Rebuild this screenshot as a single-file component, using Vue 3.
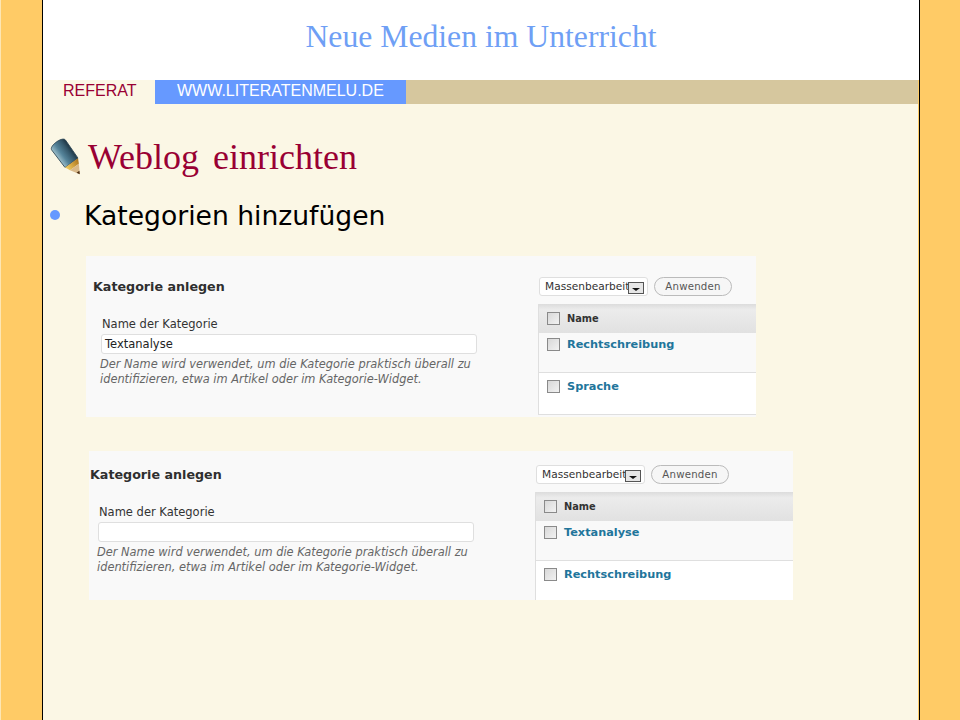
<script setup>
const panels = [
  { id: 1, value: 'Textanalyse', rows: ['Rechtschreibung', 'Sprache'] },
  { id: 2, value: '', rows: ['Textanalyse', 'Rechtschreibung'] }
]
</script>

<template>
  <div class="page">
    <div class="side side-left"></div>
    <main class="slide">
      <header class="title">Neue Medien im Unterricht</header>
      <nav class="nav">
        <span class="nav-first">REFERAT</span>
        <span class="nav-link">WWW.LITERATENMELU.DE</span>
      </nav>
      <div class="content">
        <h1 class="heading">
          <svg class="pencil" width="36" height="40" viewBox="0 0 36 40">
            <defs>
              <linearGradient id="body" x1="0" y1="0" x2="1" y2="0">
                <stop offset="0" stop-color="#9fc0cb" />
                <stop offset="0.35" stop-color="#55849a" />
                <stop offset="0.75" stop-color="#35586b" />
                <stop offset="1" stop-color="#1d3442" />
              </linearGradient>
              <linearGradient id="tip" x1="0" y1="0" x2="1" y2="0">
                <stop offset="0" stop-color="#f6d164" />
                <stop offset="1" stop-color="#a9701a" />
              </linearGradient>
            </defs>
            <g transform="translate(20 21) rotate(-36)">
              <path d="M-8.5 -16C-8.5 -21 8.5 -21 8.5 -16L8 6H-8Z" fill="url(#body)" stroke="#2b4654" stroke-width="0.8" />
              <path d="M-8 6H8L5.5 11H-5.5Z" fill="url(#tip)" />
              <path d="M-5.5 11H5.5L0 20Z" fill="#d9b98a" />
              <path d="M-1.8 17H1.8L0 20Z" fill="#4a2c10" />
            </g>
          </svg>
          <span>Weblog einrichten</span>
        </h1>
        <div class="bullet-row">
          <span class="dot"></span>
          <span>Kategorien hinzufügen</span>
        </div>
        <section v-for="panel in panels" :key="panel.id" class="panel" :class="'panel-' + panel.id">
          <div class="form-col">
            <h3 class="form-title">Kategorie anlegen</h3>
            <div class="field">
              <label class="field-label">Name der Kategorie</label>
              <div class="input">{{ panel.value }}</div>
              <p class="help">Der Name wird verwendet, um die Kategorie praktisch überall zu<br>identifizieren, etwa im Artikel oder im Kategorie-Widget.</p>
            </div>
          </div>
          <div class="list-col">
            <div class="actions">
              <div class="select">
                <span class="select-text">Massenbearbeiten</span>
                <span class="select-arrow"><i></i></span>
              </div>
              <div class="apply">Anwenden</div>
            </div>
            <div class="table">
              <div class="table-head">
                <span class="check"></span>
                <span>Name</span>
              </div>
              <div v-for="row in panel.rows" :key="row" class="table-row">
                <span class="check"></span>
                <a class="row-name">{{ row }}</a>
              </div>
            </div>
          </div>
        </section>
      </div>
    </main>
    <div class="side side-right"></div>
  </div>
</template>

<style>
html, body {
  margin: 0;
  background: #fc6;
}
</style>

<style scoped>
.page {
  display: flex;
  width: 960px;
  height: 720px;
  overflow: hidden;
}

.side {
  background: #ffcb66;
}

.side-left {
  width: 41px;
  border-left: 1px solid #fde6b4;
  border-right: 1px solid #000;
}

.side-right {
  width: 40px;
  border-left: 1px solid #000;
  margin-left: 1px;
}

.slide {
  flex: 1;
  background: #fbf7e5;
  min-width: 0;
}

.title {
  height: 80px;
  background: #fff;
  color: #6f9ff5;
  font-family: "Liberation Serif", serif;
  font-size: 31.7px;
  line-height: 74px;
  text-align: center;
  margin-right: -1px;
}

.nav {
  display: flex;
  height: 24px;
  background: #d6c79e;
  font-family: "Liberation Sans", sans-serif;
  font-size: 16px;
  line-height: 21px;
}

.nav-first {
  width: 112px;
  background: #fbf7e5;
  color: #990033;
  padding-left: 20px;
  box-sizing: border-box;
}

.nav-link {
  width: 251px;
  background: #6699ff;
  color: #fff;
  padding-left: 22px;
  box-sizing: border-box;
}

.content {
  padding: 32px 0 0 5px;
}

.heading {
  display: flex;
  align-items: center;
  margin: 0;
  height: 42px;
  color: #990033;
  font-family: "Liberation Serif", serif;
  font-size: 36px;
  font-weight: 400;
  word-spacing: 5px;
}

.pencil {
  width: 36px;
  height: 40px;
  margin-right: 4px;
  flex-shrink: 0;
}

.bullet-row {
  display: flex;
  align-items: center;
  margin-top: 21px;
  height: 32px;
  color: #000;
  font-family: "DejaVu Sans", sans-serif;
  font-size: 26.6px;
}

.dot {
  width: 10px;
  height: 10px;
  border-radius: 50%;
  background: #6699ff;
  margin: 0 24px 0 2px;
}

.panel {
  display: flex;
  background: #f9f9f9;
  font-family: "DejaVu Sans", sans-serif;
  color: #333;
}

.panel-1 {
  width: 670px;
  height: 161px;
  margin: 25px 0 0 38px;
  padding: 21px 0 0 7px;
  box-sizing: border-box;
}

.panel-2 {
  width: 704px;
  height: 149px;
  margin: 34px 0 0 41px;
  padding: 14px 0 0 1px;
  box-sizing: border-box;
}

.form-col {
  width: 445px;
  flex-shrink: 0;
}

.form-title {
  margin: 0;
  height: 20px;
  font-size: 12.7px;
  font-weight: 700;
  line-height: 20px;
  color: #2f2f2f;
}

.field {
  padding: 17px 0 0 8px;
}

.field-label {
  display: block;
  height: 20px;
  margin-left: 1px;
  font-size: 11.5px;
  line-height: 20px;
}

.input {
  width: 376px;
  height: 20px;
  box-sizing: border-box;
  background: #fff;
  border: 1px solid #dfdfdf;
  border-radius: 3px;
  padding-left: 3px;
  font-size: 11.5px;
  line-height: 18px;
  color: #222;
}

.help {
  margin: 3px 0 0 -1px;
  font-size: 11.4px;
  font-style: italic;
  line-height: 15px;
  color: #666;
  white-space: nowrap;
}

.list-col {
  flex: 1;
  min-width: 0;
  overflow: hidden;
}

.actions {
  display: flex;
  gap: 6px;
  height: 27px;
  padding-left: 1px;
}

.select {
  position: relative;
  width: 109px;
  height: 19px;
  box-sizing: border-box;
  background: #fff;
  border: 1px solid #dfdfdf;
  border-radius: 3px;
  overflow: hidden;
  padding-left: 5px;
  font-size: 10.6px;
  line-height: 17px;
  white-space: nowrap;
}

.select-arrow {
  position: absolute;
  top: 4px;
  right: 3px;
  width: 16px;
  height: 12px;
  box-sizing: border-box;
  background: #e6e6e6;
  border: 1px solid #555;
}

.select-arrow i {
  position: absolute;
  left: 3px;
  top: 5px;
  border: 4px solid transparent;
  border-top: 3px solid #111;
  border-bottom: 0;
}

.apply {
  width: 78px;
  height: 19px;
  box-sizing: border-box;
  border: 1px solid #bbb;
  border-radius: 10px;
  background: #f6f6f6;
  color: #555;
  font-size: 10.2px;
  line-height: 17px;
  text-align: center;
  letter-spacing: 0.2px;
}

.table {
  border-left: 1px solid #dfdfdf;
  width: 100%;
}

.table-head {
  display: flex;
  align-items: center;
  height: 29px;
  background: linear-gradient(#dcdcdc, #ececec 20%, #e1e1e1);
  padding-left: 8px;
  font-size: 9.8px;
  font-weight: 700;
  color: #333;
}

.table-row {
  display: flex;
  height: 40px;
  padding: 5px 0 0 8px;
  box-sizing: border-box;
  border-bottom: 1px solid #dfdfdf;
}

.table-row:nth-child(3) {
  background: #fff;
  height: 42px;
  padding-top: 7px;
}

.check {
  width: 13px;
  height: 13px;
  box-sizing: border-box;
  background: linear-gradient(135deg, #d8d8d8, #f2f2f2);
  border: 1px solid #8a8a8a;
  margin-right: 7px;
  flex-shrink: 0;
}

.row-name {
  color: #21759b;
  font-size: 11.3px;
  font-weight: 700;
  line-height: 14px;
}
</style>
